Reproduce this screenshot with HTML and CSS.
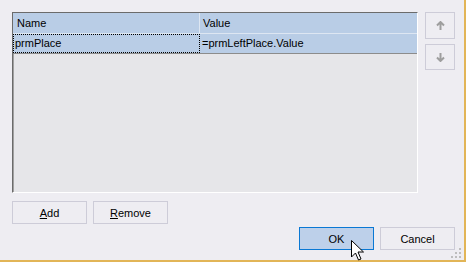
FILE: index.html
```html
<!DOCTYPE html>
<html lang="en">
<head>
    <meta charset="UTF-8">
    <title>Parameters</title>
    <link rel="stylesheet" href="styles.css">
</head>
<body>
    <div class="dialog">
        <div class="top">
            <div class="grid">
                <div class="row header">
                    <div class="cell name">Name</div>
                    <div class="cell value">Value</div>
                </div>
                <div class="row data">
                    <div class="cell name focus">prmPlace</div>
                    <div class="cell value">=prmLeftPlace.Value</div>
                </div>
            </div>
            <div class="side">
                <button class="move">
                    <svg width="9" height="9" viewBox="0 0 9 9"><path d="M4.5 1 L4.5 9 M1 4.5 L4.5 1 L8 4.5" fill="none" stroke="#9e9e9e" stroke-width="2"/></svg>
                </button>
                <button class="move">
                    <svg width="9" height="9" viewBox="0 0 9 9"><path d="M4.5 0 L4.5 8 M1 4.5 L4.5 8 L8 4.5" fill="none" stroke="#9e9e9e" stroke-width="2"/></svg>
                </button>
            </div>
        </div>
        <div class="edit-row">
            <button class="btn"><u>A</u>dd</button>
            <button class="btn"><u>R</u>emove</button>
        </div>
        <div class="confirm-row">
            <button class="btn default">OK</button>
            <button class="btn">Cancel</button>
        </div>

        <svg class="grip" width="10" height="10" viewBox="0 0 10 10">
            <rect x="8" y="0" width="2" height="2" fill="#bdbdbd"/>
            <rect x="4" y="4" width="2" height="2" fill="#bdbdbd"/>
            <rect x="8" y="4" width="2" height="2" fill="#bdbdbd"/>
            <rect x="0" y="8" width="2" height="2" fill="#bdbdbd"/>
            <rect x="4" y="8" width="2" height="2" fill="#bdbdbd"/>
            <rect x="8" y="8" width="2" height="2" fill="#bdbdbd"/>
        </svg>

        <svg class="cursor" width="14" height="22" viewBox="0 0 14 22">
            <path d="M0.5 0.5 L0.5 17 L4.5 13 L7.5 20 L10 19 L7 12 L12.5 12 Z" fill="#fff" stroke="#000" stroke-width="1"/>
        </svg>
    </div>
</body>
</html>
```

FILE: styles.css
```css
body {
    margin: 0;
    font-family: 'Liberation Sans', Arial, sans-serif;
    font-size: 11px;
    color: #000;
    background: #eeedf2;
}
.dialog {
    position: relative;
    box-sizing: border-box;
    width: 466px;
    height: 262px;
    padding: 12px 9px 0 12px;
    background: #eeedf2;
    border-right: 2px solid #e2b557;
    border-bottom: 2px solid #e2b557;
}
.top {
    display: flex;
    gap: 7px;
}
.grid {
    box-sizing: border-box;
    width: 407px;
    height: 181px;
    background: #e6e6e9;
    border: 1px solid;
    border-color: #6b6b6b #fff #fff #6b6b6b;
    box-shadow: inset 1px 0 0 #a0a0a0;
}
.row {
    display: flex;
    background: #b9cde6;
}
.row.header {
    height: 20px;
    border-bottom: 1px solid #dde6f2;
}
.row.data {
    height: 19px;
    border-bottom: 1px solid #8c8c8c;
}
.cell {
    box-sizing: border-box;
    line-height: 20px;
    white-space: nowrap;
}
.cell.name {
    width: 187px;
    border-right: 1px solid #dde6f2;
}
.header .cell.name {
    padding-left: 4px;
}
.header .cell.value {
    padding-left: 3px;
}
.data .cell {
    line-height: 19px;
    padding-left: 2px;
}
.data .cell.name {
    border-right: none;
}
.focus {
    outline: 1px dotted #000;
    outline-offset: -1px;
}
.side {
    display: flex;
    flex-direction: column;
    gap: 5px;
}
button {
    font-family: inherit;
    font-size: 11px;
    color: #000;
    background: #eeedf2;
    border: 1px solid #cdccd8;
    border-radius: 0;
    padding: 0;
    cursor: pointer;
}
.move {
    width: 30px;
    height: 27px;
    display: flex;
    align-items: center;
    justify-content: center;
}
.move + .move {
    height: 26px;
}
.edit-row {
    display: flex;
    gap: 6px;
    margin-top: 8px;
}
.confirm-row {
    display: flex;
    justify-content: flex-end;
    gap: 6px;
    margin-top: 3px;
}
.btn {
    width: 75px;
    height: 23px;
}
.btn.default {
    background: #bdd0ea;
    border-color: #0a78d4;
}
.grip {
    position: absolute;
    right: 3px;
    bottom: 2px;
}
.cursor {
    position: absolute;
    left: 351px;
    top: 240px;
}
```
